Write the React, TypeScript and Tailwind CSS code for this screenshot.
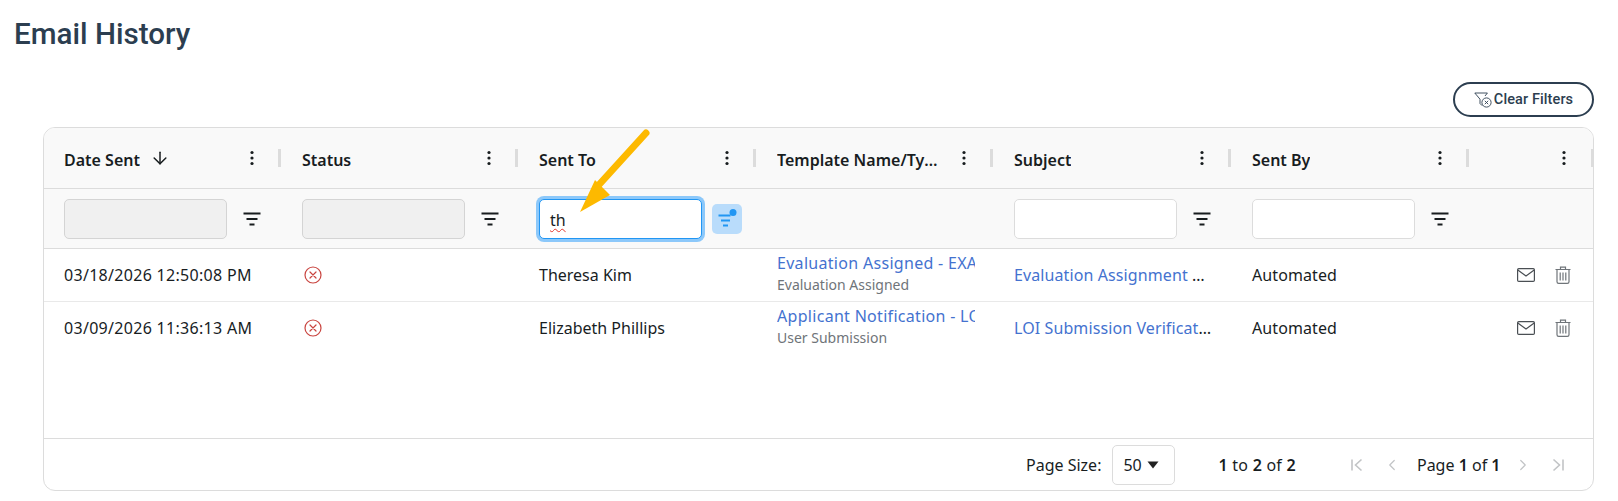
import { ArrowDown, ChevronLeft, ChevronRight } from "lucide-react";

const columnWidths = ["w-[238px]", "w-[237px]", "w-[238px]", "w-[237px]", "w-[238px]", "w-[238px]"];

function Dots() {
    return (
        <svg viewBox="0 0 16 16" className="w-4 h-4 shrink-0 text-[#181d1f]" fill="currentColor">
            <circle cx="8" cy="2.5" r="1.6" />
            <circle cx="8" cy="8" r="1.6" />
            <circle cx="8" cy="13.5" r="1.6" />
        </svg>
    );
}

function FilterLines({ active }: { active?: boolean }) {
    return (
        <svg viewBox="0 0 20 20" className={active ? "w-5 h-5 text-[#2196f3]" : "w-5 h-5 text-[#181d1f]"} fill="currentColor">
            {active ? (
                <>
                    <rect x="1.5" y="5.5" width="12" height="2" />
                    <rect x="4" y="10.5" width="9" height="2" />
                    <rect x="6" y="15.5" width="5" height="2" />
                    <circle cx="16" cy="3.5" r="3.5" />
                </>
            ) : (
                <>
                    <rect x="1.5" y="3.5" width="17" height="2" />
                    <rect x="4.5" y="9" width="11" height="2" />
                    <rect x="7.5" y="14.5" width="5" height="2" />
                </>
            )}
        </svg>
    );
}

function ClearIcon() {
    return (
        <svg viewBox="0 0 18 16" className="w-[18px] h-4 text-[#2c3e50]" fill="none" stroke="currentColor" strokeWidth="0.9">
            <path d="M0.8 1h12.6M0.8 1l5.2 6.2v4.3l2.2 2.2M13.4 1l-2.4 3" />
            <circle cx="12.5" cy="10.5" r="4.6" />
            <path d="M10.8 8.8l3.4 3.4M14.2 8.8l-3.4 3.4" />
        </svg>
    );
}

function CircleX() {
    return (
        <svg viewBox="0 0 18 18" className="w-[18px] h-[18px] ml-[2px] text-[#c9443f]" fill="none" stroke="currentColor" strokeWidth="1.2">
            <circle cx="9" cy="9" r="8" />
            <path d="M6 6l6 6M12 6l-6 6" strokeLinecap="round" />
        </svg>
    );
}

function MailIcon() {
    return (
        <svg viewBox="0 0 18 14" className="w-[18px] h-[14px] text-[#4a4f54]" fill="none" stroke="currentColor" strokeWidth="1.2">
            <rect x="0.6" y="0.6" width="16.8" height="12.8" rx="1.2" />
            <path d="M0.8 2l8.2 6 8.2-6" />
        </svg>
    );
}

function Trash() {
    return (
        <svg viewBox="0 0 16 18" className="w-4 h-[18px] text-[#6f7479]" fill="none" stroke="currentColor" strokeWidth="1.2">
            <path d="M0.5 3.5h15M5.5 3.5V1.2h5v2.3M2 3.5v12.2c0 1 .7 1.7 1.7 1.7h8.6c1 0 1.7-.7 1.7-1.7V3.5" />
            <path d="M5.2 6.5v8M8 6.5v8M10.8 6.5v8" />
        </svg>
    );
}

function PageEnd({ last }: { last?: boolean }) {
    return (
        <svg viewBox="0 0 16 16" className={last ? "w-4 h-4 text-[#c2c4c6] -scale-x-100" : "w-4 h-4 text-[#c2c4c6]"} fill="none" stroke="currentColor" strokeWidth="1.6">
            <path d="M3 2.5v11M12.5 2.5L6.5 8l6 5.5" />
        </svg>
    );
}

function HeaderCell({ label, width, sort }: { label: string; width: string; sort?: boolean }) {
    return (
        <div className={`${width} shrink-0 flex items-center pl-5`}>
            <div className="flex-1 min-w-0 flex items-center font-semibold text-[16px] text-[#181d1f] pt-[3px]">
                <span className="truncate max-w-[161px]">{label}</span>
                {sort && <ArrowDown size={20} strokeWidth={1.8} className="ml-[10px] -mt-[3px]" />}
            </div>
            <Dots />
            <div className="ml-[18px] mr-px w-[3px] h-[18px] bg-[#dcdcdc] shrink-0" />
        </div>
    );
}

function FilterCell({ width, disabled }: { width: string; disabled?: boolean }) {
    return (
        <div className={`${width} shrink-0 flex items-center pl-5`}>
            <div
                className={
                    disabled
                        ? "w-[163px] h-10 rounded-[5px] border border-[#d4d4d4] bg-[#f0f0f0]"
                        : "w-[163px] h-10 rounded-[5px] border border-[#dcdcdc] bg-white"
                }
            />
            <div className="ml-[15px]">
                <FilterLines />
            </div>
        </div>
    );
}

const rows = [
    {
        date: "03/18/2026 12:50:08 PM",
        to: "Theresa Kim",
        template: "Evaluation Assigned - EXAMPLE",
        type: "Evaluation Assigned",
        subject: "Evaluation Assignment Notification",
    },
    {
        date: "03/09/2026 11:36:13 AM",
        to: "Elizabeth Phillips",
        template: "Applicant Notification - LOI Submission",
        type: "User Submission",
        subject: "LOI Submission Verification Notice",
    },
];

export default function App() {
    return (
        <div className="relative w-[1618px] h-[501px] bg-white overflow-hidden font-['Noto_Sans','Open_Sans',sans-serif] text-[#181d1f]">
            <h1 className="pl-[14px] pt-[13px] h-[82px] font-['Roboto',sans-serif] font-medium text-[29.6px] leading-[42px] text-[#2c3e50]">
                Email History
            </h1>

            <div className="flex justify-end pr-6 h-[45px]">
                <button className="w-[141px] h-[35px] flex items-center justify-center gap-[2px] rounded-full border-2 border-[#2c3e50] font-['Roboto',sans-serif] font-medium text-[14.5px] tracking-[0.1px] text-[#2c3e50]">
                    <ClearIcon />
                    Clear Filters
                </button>
            </div>

            <div className="ml-[43px] w-[1551px] h-[364px] flex flex-col rounded-xl border border-[#dcdcdc] overflow-hidden">
                <div className="h-[61px] flex shrink-0 bg-[#f9f9f9] border-b border-[#dcdcdc]">
                    <HeaderCell label="Date Sent" width={columnWidths[0]} sort />
                    <HeaderCell label="Status" width={columnWidths[1]} />
                    <HeaderCell label="Sent To" width={columnWidths[2]} />
                    <HeaderCell label="Template Name/Type" width={columnWidths[3]} />
                    <HeaderCell label="Subject" width={columnWidths[4]} />
                    <HeaderCell label="Sent By" width={columnWidths[5]} />
                    <div className="flex-1 flex items-center justify-end">
                        <Dots />
                        <div className="ml-[19px] w-[2px] h-[18px] bg-[#dcdcdc]" />
                    </div>
                </div>

                <div className="h-[60px] flex shrink-0 bg-[#f9f9f9] border-b border-[#dcdcdc]">
                    <FilterCell width={columnWidths[0]} disabled />
                    <FilterCell width={columnWidths[1]} disabled />
                    <div className={`${columnWidths[2]} shrink-0 flex items-center pl-5`}>
                        <div className="w-[163px] h-10 rounded-[5px] border border-[#2196f3] bg-white ring-[3px] ring-[#8cc8fa] flex items-center pl-[10px] pt-[2px] text-[16px]">
                            <span className="underline decoration-wavy decoration-[#e5352b] decoration-1 underline-offset-2">th</span>
                        </div>
                        <div className="ml-[10px] w-[30px] h-[30px] rounded-[5px] bg-[#b9dcfb] flex items-center justify-center">
                            <FilterLines active />
                        </div>
                    </div>
                    <div className={`${columnWidths[3]} shrink-0`} />
                    <FilterCell width={columnWidths[4]} />
                    <FilterCell width={columnWidths[5]} />
                </div>

                <div className="flex-1">
                    {rows.map((row, i) => (
                        <div key={row.date} className={i === 0 ? "h-[53px] flex items-center border-b border-[#e9e9e9] text-[16px]" : "h-[52px] flex items-center text-[16px]"}>
                            <div className={`${columnWidths[0]} shrink-0 pl-5 tracking-[0.3px]`}>{row.date}</div>
                            <div className={`${columnWidths[1]} shrink-0 pl-5`}>
                                <CircleX />
                            </div>
                            <div className={`${columnWidths[2]} shrink-0 pl-5`}>{row.to}</div>
                            <div className={`${columnWidths[3]} shrink-0 pl-5 pr-[19px] pb-[3px] whitespace-nowrap`}>
                                <div className="overflow-hidden leading-[23px] tracking-[0.3px] text-[#4472cf]">{row.template}</div>
                                <div className="overflow-hidden leading-[20px] text-[14px] text-[#6f7479]">{row.type}</div>
                            </div>
                            <div className={`${columnWidths[4]} shrink-0 pl-5 pr-[18px] truncate tracking-[0.1px]`}>
                                <span className="text-[#4472cf]">{row.subject}</span>
                            </div>
                            <div className={`${columnWidths[5]} shrink-0 pl-5 tracking-[0.1px]`}>Automated</div>
                            <div className="flex-1 flex items-center justify-end gap-[20px] pr-[22px]">
                                <MailIcon />
                                <Trash />
                            </div>
                        </div>
                    ))}
                </div>

                <div className="h-[52px] shrink-0 flex items-center border-t border-[#dcdcdc] text-[16px]">
                    <div className="ml-[982px]">Page Size:</div>
                    <div className="ml-[11px] w-[63px] h-10 rounded-[5px] border border-[#dcdcdc] flex items-center pl-[10px] gap-[5px]">
                        50
                        <svg viewBox="0 0 12 8" className="w-3 h-2 fill-[#222]">
                            <path d="M0.5 0.5h11L6 7.5z" />
                        </svg>
                    </div>
                    <div className="ml-[43px] tracking-[0.25px]">
                        <b className="font-semibold">1</b> to <b className="font-semibold">2</b> of <b className="font-semibold">2</b>
                    </div>
                    <div className="ml-[53px] flex items-center">
                        <PageEnd />
                        <ChevronLeft size={18} strokeWidth={1.6} className="ml-[18px] text-[#c2c4c6]" />
                        <span className="ml-[16px]">
                            Page <b className="font-semibold">1</b> of <b className="font-semibold">1</b>
                        </span>
                        <ChevronRight size={18} strokeWidth={1.6} className="ml-[14px] text-[#c2c4c6]" />
                        <div className="ml-[18px]">
                            <PageEnd last />
                        </div>
                    </div>
                </div>
            </div>

            {/* annotation arrow drawn on top of the screenshot */}
            <svg viewBox="0 0 1618 501" className="absolute inset-0 w-[1618px] h-[501px] pointer-events-none">
                <path d="M646 133L596 188" stroke="#fdb900" strokeWidth="7" strokeLinecap="round" />
                <path d="M580 212L595 180L610 195z" fill="#fdb900" />
            </svg>
        </div>
    );
}
